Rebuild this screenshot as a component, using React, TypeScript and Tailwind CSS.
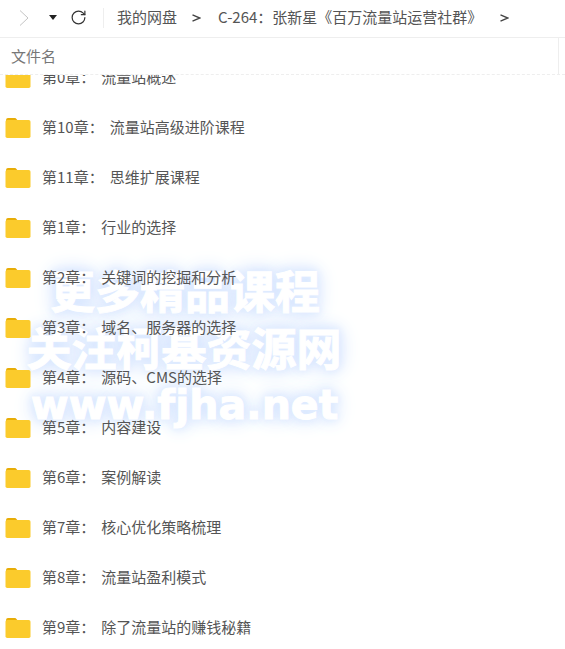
import { RotateCw } from "lucide-react";

const FONT = "font-['Noto_Sans_CJK_SC','Noto_Sans',sans-serif]";

const folders = [
  { chapter: "第0章：", title: "流量站概述" },
  { chapter: "第10章：", title: "流量站高级进阶课程" },
  { chapter: "第11章：", title: "思维扩展课程" },
  { chapter: "第1章：", title: "行业的选择" },
  { chapter: "第2章：", title: "关键词的挖掘和分析" },
  { chapter: "第3章：", title: "域名、服务器的选择" },
  { chapter: "第4章：", title: "源码、CMS的选择" },
  { chapter: "第5章：", title: "内容建设" },
  { chapter: "第6章：", title: "案例解读" },
  { chapter: "第7章：", title: "核心优化策略梳理" },
  { chapter: "第8章：", title: "流量站盈利模式" },
  { chapter: "第9章：", title: "除了流量站的赚钱秘籍" },
];

function FolderIcon() {
  return (
    <svg width="26" height="21" viewBox="0 0 26 21" className="shrink-0">
      <path d="M1 3.5C1 1.8 1.8 1 3 1h6.5c1 0 1.5.4 2.2 1.2L13 4H1z" fill="#e8ad06" />
      <rect x="0.5" y="3" width="25" height="18" rx="1.8" fill="#fbcb2c" />
    </svg>
  );
}

function CrumbArrow() {
  return (
    <svg width="9" height="8" viewBox="0 0 9 8" className="shrink-0">
      <path d="M0.5 0.8 8 4 0.5 7.2" fill="none" stroke="#444444" strokeWidth="1.4" />
    </svg>
  );
}

function Toolbar() {
  return (
    <div className="flex h-[38px] items-center border-b border-[#eeeeee] pb-[2px] pl-[19px] text-[15px] text-[#555555]">
      <svg width="10" height="16" viewBox="0 0 10 16" className="shrink-0">
        <path d="M1 0.5 9 8 1 15.5" fill="none" stroke="#c4c4c4" strokeWidth="1" />
      </svg>
      <div className="ml-[20px] h-0 w-0 border-x-[4px] border-t-[5px] border-x-transparent border-t-[#222222]" />
      <RotateCw size={17} strokeWidth={1.7} className="ml-[13px] text-[#333333]" />
      <div className="ml-[16px] h-[20px] w-px bg-[#eeeeee]" />
      <span className="ml-[13px] whitespace-nowrap">我的网盘</span>
      <div className="ml-[15px]">
        <CrumbArrow />
      </div>
      <span className="ml-[17px] whitespace-nowrap">C-264：张新星《百万流量站运营社群》</span>
      <div className="ml-[18px]">
        <CrumbArrow />
      </div>
    </div>
  );
}

function FolderRow({ chapter, title }: { chapter: string; title: string }) {
  return (
    <div className="flex h-[50px] shrink-0 items-center pl-[5px] text-[15px] text-[#555555]">
      <FolderIcon />
      <span className="ml-[11px] whitespace-nowrap">{chapter}</span>
      <span className="ml-[6px] whitespace-nowrap">{title}</span>
    </div>
  );
}

function Watermark() {
  const glow = "[text-shadow:0_0_4px_#e6f0ff,0_0_10px_#d3e3ff,0_0_18px_#cfe0ff,0_0_26px_#dde9ff]";
  return (
    <div className={`pointer-events-none absolute left-0 top-[261px] flex w-[370px] flex-col items-center font-bold text-white [-webkit-text-stroke:1px_white] ${glow}`}>
      <span className="h-[57px] text-[45px] leading-[57px]">更多精品课程</span>
      <span className="h-[58px] pr-[2px] text-[45px] leading-[58px]">关注柯基资源网</span>
      <span className="h-[58px] pr-[1px] font-['DejaVu_Sans',sans-serif] text-[41px] leading-[58px]">www.fjha.net</span>
    </div>
  );
}

export default function App() {
  return (
    <div className={`relative h-[649px] w-[565px] overflow-hidden bg-white ${FONT}`}>
      <Watermark />
      <div className="relative z-10">
        <Toolbar />
        <div className="flex h-[37px] border-b border-dashed border-[#eeeeee]">
          <div className="flex w-[559px] items-center border-r border-[#eeeeee] pl-[11px] text-[15px] text-[#777777]">
            文件名
          </div>
        </div>
        <div className="h-[574px] overflow-hidden">
          <div className="-mt-[23px] flex flex-col">
            {folders.map((f) => (
              <FolderRow key={f.chapter} chapter={f.chapter} title={f.title} />
            ))}
          </div>
        </div>
      </div>
    </div>
  );
}
